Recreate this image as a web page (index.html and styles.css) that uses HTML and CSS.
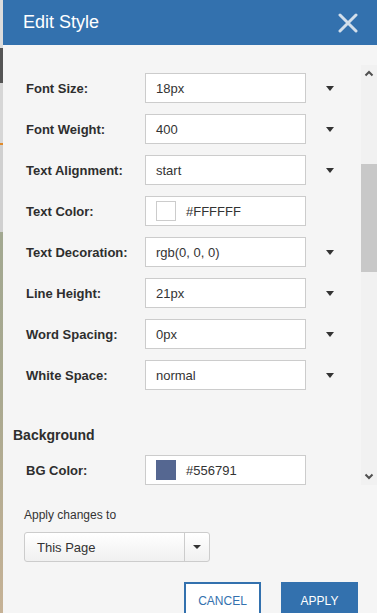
FILE: index.html
```html
<!doctype html>
<html lang="en">
<head>
    <meta charset="UTF-8">
    <title>Edit Style</title>
    <link rel="stylesheet" href="styles.css">
</head>
<body>
    <div class="backdrop"></div>
    <div class="dialog">
        <div class="dialog-header">
            <span class="dialog-title">Edit Style</span>
            <svg class="close-icon" width="20" height="20" viewBox="0 0 20 20">
                <path d="M2 2L18 18M18 2L2 18" stroke="#d3dfeb" stroke-width="3" stroke-linecap="round"/>
            </svg>
        </div>
        <div class="dialog-body">
            <div class="scroll-area">
                <div class="scroll-content">
                    <div class="field-row">
                        <label>Font Size:</label>
                        <div class="field-input">18px</div>
                        <span class="caret"></span>
                    </div>
                    <div class="field-row">
                        <label>Font Weight:</label>
                        <div class="field-input">400</div>
                        <span class="caret"></span>
                    </div>
                    <div class="field-row">
                        <label>Text Alignment:</label>
                        <div class="field-input">start</div>
                        <span class="caret"></span>
                    </div>
                    <div class="field-row">
                        <label>Text Color:</label>
                        <div class="field-input">
                            <span class="swatch swatch-white"></span>#FFFFFF
                        </div>
                    </div>
                    <div class="field-row">
                        <label>Text Decoration:</label>
                        <div class="field-input">rgb(0, 0, 0)</div>
                        <span class="caret"></span>
                    </div>
                    <div class="field-row">
                        <label>Line Height:</label>
                        <div class="field-input">21px</div>
                        <span class="caret"></span>
                    </div>
                    <div class="field-row">
                        <label>Word Spacing:</label>
                        <div class="field-input">0px</div>
                        <span class="caret"></span>
                    </div>
                    <div class="field-row">
                        <label>White Space:</label>
                        <div class="field-input">normal</div>
                        <span class="caret"></span>
                    </div>
                    <h3 class="section-title">Background</h3>
                    <div class="field-row">
                        <label>BG Color:</label>
                        <div class="field-input">
                            <span class="swatch swatch-bg"></span>#556791
                        </div>
                    </div>
                </div>
                <div class="scrollbar">
                    <div class="scroll-btn">
                        <svg width="10" height="7" viewBox="0 0 10 7"><path d="M1.5 5.5L5 2L8.5 5.5" fill="none" stroke="#505050" stroke-width="2"/></svg>
                    </div>
                    <div class="scroll-track">
                        <div class="scroll-thumb"></div>
                    </div>
                    <div class="scroll-btn">
                        <svg width="10" height="7" viewBox="0 0 10 7"><path d="M1.5 1.5L5 5L8.5 1.5" fill="none" stroke="#505050" stroke-width="2"/></svg>
                    </div>
                </div>
            </div>
            <div class="apply-section">
                <div class="apply-label">Apply changes to</div>
                <div class="apply-select">
                    <span class="apply-value">This Page</span>
                    <span class="apply-arrow"><span class="caret small"></span></span>
                </div>
            </div>
            <div class="dialog-actions">
                <button class="btn btn-cancel">Cancel</button>
                <button class="btn btn-apply">Apply</button>
            </div>
        </div>
    </div>
</body>
</html>
```

FILE: styles.css
```css
*{
    margin:0;
    padding:0;
    box-sizing: border-box;
}
body{
    display: flex;
    height: 613px;
    overflow: hidden;
    font-family: "Liberation Sans", Arial, sans-serif;
    color: #333333;
}
.backdrop{
    width: 3px;
    flex-shrink: 0;
    background: linear-gradient(to bottom,
        #dcdcdc 0, #dcdcdc 48px,
        #555555 48px, #555555 83px,
        #d6d6d6 83px, #d6d6d6 143px,
        #e08a2a 143px, #e08a2a 145px,
        #d0d0d0 145px, #d0d0d0 232px,
        #a2a891 232px, #aaa990 400px, #c6b296 613px);
}
.dialog{
    flex: 1;
    display: flex;
    flex-direction: column;
    background: #f5f5f5;
}
.dialog-header{
    height: 45px;
    flex-shrink: 0;
    background: #3371ae;
    display: flex;
    align-items: center;
    justify-content: space-between;
    padding: 0 19px 0 20px;
}
.dialog-title{
    color: #ffffff;
    font-size: 18px;
}
.close-icon{
    display: block;
}
.dialog-body{
    padding-top: 20px;
}
.scroll-area{
    display: flex;
    height: 420px;
}
.scroll-content{
    flex: 1;
    overflow: hidden;
    padding: 8px 0 0 10px;
}
.field-row{
    display: flex;
    align-items: center;
    height: 30px;
    margin-bottom: 11px;
    padding-left: 13px;
}
.field-row label{
    width: 119px;
    font-size: 13px;
    font-weight: bold;
    color: #2e2e2e;
}
.field-input{
    width: 161px;
    height: 30px;
    border: 1px solid #cccccc;
    background: #ffffff;
    padding-left: 10px;
    font-size: 13px;
    display: flex;
    align-items: center;
}
.caret{
    width: 0;
    height: 0;
    margin-left: 20px;
    border-left: 4.5px solid transparent;
    border-right: 4.5px solid transparent;
    border-top: 5px solid #333333;
}
.caret.small{
    margin: 0;
    border-left-width: 4px;
    border-right-width: 4px;
    border-top-width: 4px;
}
.swatch{
    width: 20px;
    height: 20px;
    margin-right: 10px;
}
.swatch-white{
    background: #ffffff;
    border: 1px solid #cccccc;
}
.swatch-bg{
    background: #556791;
}
.section-title{
    font-size: 14px;
    font-weight: bold;
    line-height: 20px;
    margin: 35px 0 10px;
    color: #2e2e2e;
}
.scrollbar{
    width: 16px;
    flex-shrink: 0;
    background: #f1f1f1;
    display: flex;
    flex-direction: column;
}
.scroll-btn{
    height: 17px;
    display: flex;
    align-items: center;
    justify-content: center;
}
.scroll-track{
    flex: 1;
}
.scroll-thumb{
    margin-top: 82px;
    height: 108px;
    background: #c8c8c8;
}
.apply-section{
    padding-left: 21px;
}
.apply-label{
    font-size: 12px;
    line-height: 16px;
    margin-top: 22px;
    margin-bottom: 9px;
}
.apply-select{
    width: 186px;
    height: 30px;
    display: flex;
    border: 1px solid #cccccc;
    border-radius: 3px;
    background: linear-gradient(#ffffff, #f0f0f0);
    font-size: 13px;
}
.apply-value{
    flex: 1;
    display: flex;
    align-items: center;
    padding-left: 12px;
    border-right: 1px solid #cccccc;
}
.apply-arrow{
    width: 24px;
    display: flex;
    align-items: center;
    justify-content: center;
}
.dialog-actions{
    display: flex;
    justify-content: flex-end;
    gap: 20px;
    padding-right: 19px;
    margin-top: 20px;
}
.btn{
    width: 77px;
    height: 36px;
    font-family: "Liberation Sans", Arial, sans-serif;
    font-size: 12px;
    text-transform: uppercase;
    border: 2px solid #3371ae;
    padding-top: 2px;
}
.btn-cancel{
    background: #ffffff;
    color: #3371ae;
}
.btn-apply{
    background: #3371ae;
    color: #ffffff;
}
```
